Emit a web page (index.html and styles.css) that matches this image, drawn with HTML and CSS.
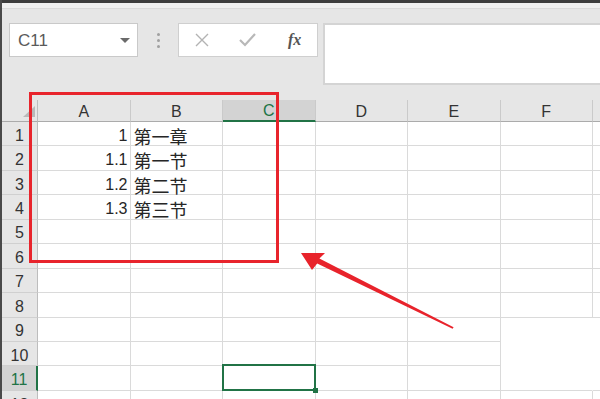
FILE: index.html
```html
<!DOCTYPE html>
<html lang="zh-CN">
<head>
    <meta charset="utf-8">
    <title>Excel sheet</title>
    <link rel="stylesheet" href="styles.css">
</head>

<body>
    <div class="titlebar"></div>
    <div class="ribbon-edge"></div>
    <div class="toolbar">
        <div class="namebox">
            <span>C11</span>
            <span class="caret"></span>
        </div>
        <div class="grip"><i></i><i></i><i></i></div>
        <div class="fbuttons">
            <svg class="icon-x" width="14" height="14" viewBox="0 0 14 14">
                <path d="M1 1 L13 13 M13 1 L1 13" stroke="#b3b3b3" stroke-width="1.4" fill="none"/>
            </svg>
            <svg class="icon-ok" width="17" height="14" viewBox="0 0 17 14">
                <path d="M1 7 L6 12 L16 1" stroke="#b8b8b8" stroke-width="2.2" fill="none"/>
            </svg>
            <span class="fx">fx</span>
        </div>
        <div class="formula"></div>
    </div>
    <div class="sheet" id="sheet"></div>
    <div class="callout"></div>
    <svg class="arrow" width="600" height="399" viewBox="0 0 600 399">
        <polygon points="301,253 325,253 319.4,258.6 453.6,327.2 452.6,328.8 317.2,263.4 312,270" fill="#e8232b"/>
    </svg>
    <script>
        var cols = ["A", "B", "C", "D", "E", "F", "G"];
        var data = {
            1: ["1", "第一章"],
            2: ["1.1", "第一节"],
            3: ["1.2", "第二节"],
            4: ["1.3", "第三节"]
        };
        var html = "<div class='corner'><span></span></div>";
        cols.forEach(function(c) {
            // only a sliver of column G is in view, so no letter
            var label = c == "G" ? "" : c;
            html += "<div class='colhead" + (c == "C" ? " active" : "") + "'>" + label + "</div>";
        });
        for (var r = 1; r <= 12; r++) {
            html += "<div class='rowhead" + (r == 11 ? " active" : "") + "'>" + r + "</div>";
            cols.forEach(function(c, i) {
                var cls = "cell";
                var text = "";
                if (data[r] && i == 0) { cls += " num"; text = data[r][0]; }
                if (data[r] && i == 1) { cls += " txt"; text = data[r][1]; }
                // blank patch in the bottom right of the original picture
                if ((c == "F" || c == "G") && (r == 9 || r == 10)) cls += " no-bottom";
                if (c == "F" && r >= 9 && r <= 11) cls += " no-right";
                if (c == "C" && r == 11) cls += " selected";
                html += "<div class='" + cls + "'>" + text + "</div>";
            });
        }
        document.getElementById("sheet").innerHTML = html;
    </script>
</body>
</html>
```

FILE: styles.css
```css
* {
    box-sizing: border-box;
}
body {
    background-color: #E6E6E6;
    border-left: 2px solid #4A4A4A;
    color: #262626;
    font-family: "Liberation Sans", Arial, sans-serif;
    height: 399px;
    margin: 0;
    overflow: hidden;
    position: relative;
    width: 600px;
}
.titlebar {
    background-color: #3D3D3D;
    height: 3px;
}
.ribbon-edge {
    background-color: #F0F0F0;
    border-bottom: 1px solid #DADADA;
    height: 6px;
}
.toolbar {
    align-items: flex-start;
    display: flex;
    height: 76px;
    padding: 14px 0 0 7px;
}
.namebox {
    align-items: center;
    background-color: #FFF;
    border: 1px solid #C9C9C9;
    color: #5A5A5A;
    display: flex;
    font-size: 17px;
    height: 34px;
    justify-content: space-between;
    padding: 1px 7px 0 8px;
    width: 129px;
}
.caret {
    border-left: 5px solid transparent;
    border-right: 5px solid transparent;
    border-top: 5px solid #6A6A6A;
    height: 0;
    width: 0;
}
.grip {
    display: flex;
    flex-direction: column;
    gap: 3px;
    margin: 10px 18px 0 19px;
}
.grip i {
    background-color: #A0A0A0;
    border-radius: 50%;
    display: block;
    height: 3px;
    width: 3px;
}
.fbuttons {
    align-items: center;
    background-color: #FFF;
    border: 1px solid #CFCFCF;
    display: flex;
    height: 34px;
    padding-left: 16px;
    width: 140px;
}
.icon-ok {
    margin-left: 30px;
}
.fx {
    color: #555;
    font-family: "Liberation Serif", serif;
    font-size: 16px;
    font-style: italic;
    font-weight: 700;
    margin-left: 32px;
}
.formula {
    background-color: #FFF;
    border: 2px solid #D4D4D4;
    flex: 1;
    height: 62px;
    margin: 0 -10px 0 5px;
}
.sheet {
    display: grid;
    grid-template-columns: 36px repeat(6, 92.5px) 8px;
    grid-template-rows: 22px repeat(12, 24.45px);
    margin-top: 15px;
}
.corner {
    border-bottom: 1px solid #ABABAB;
    border-right: 1px solid #BDBDBD;
    position: relative;
}
.corner span {
    border-bottom: 11px solid #B9B9B9;
    border-left: 12px solid transparent;
    bottom: 4px;
    position: absolute;
    right: 2px;
}
.colhead {
    align-items: center;
    border-bottom: 1px solid #ABABAB;
    border-right: 1px solid #CACACA;
    color: #333;
    display: flex;
    font-size: 16px;
    justify-content: center;
    padding-top: 2px;
}
.colhead.active {
    background-color: #D3D3D3;
    border-bottom: 2px solid #217346;
    color: #217346;
}
.rowhead {
    align-items: center;
    border-bottom: 1px solid #D0D0D0;
    border-right: 1px solid #BDBDBD;
    color: #333;
    display: flex;
    font-size: 16px;
    justify-content: center;
    padding-top: 4px;
}
.rowhead.active {
    background-color: #D3D3D3;
    border-right: 2px solid #217346;
    color: #217346;
}
.cell {
    align-items: center;
    background-color: #FFF;
    border-bottom: 1px solid #DADADA;
    border-right: 1px solid #DADADA;
    display: flex;
    font-size: 16px;
    padding-top: 4px;
    position: relative;
}
.num {
    justify-content: flex-end;
    padding-right: 2px;
}
.txt {
    font-family: "Noto Sans CJK SC", "Liberation Sans", sans-serif;
    font-size: 18px;
    padding-left: 3px;
}
.no-bottom {
    border-bottom-color: #FFF;
}
.no-right {
    border-right-color: #FFF;
}
.selected::after {
    border: 2px solid #217346;
    bottom: -1px;
    content: "";
    left: -1px;
    position: absolute;
    right: -1px;
    top: -2px;
}
.selected::before {
    background-color: #217346;
    bottom: -3px;
    content: "";
    height: 5px;
    position: absolute;
    right: -3px;
    width: 5px;
    z-index: 1;
}
.callout {
    border: 3px solid #E8242C;
    height: 171px;
    left: 27px;
    position: absolute;
    top: 92px;
    width: 250px;
}
.arrow {
    left: -2px;
    position: absolute;
    top: 0;
}
```
